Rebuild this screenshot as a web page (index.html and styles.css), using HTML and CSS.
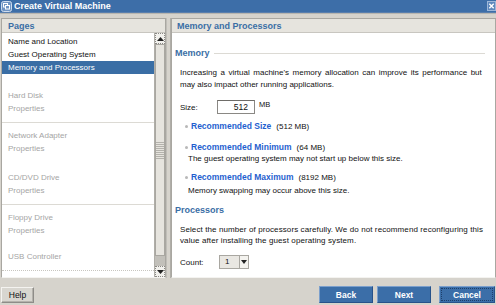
FILE: index.html
```html
<!DOCTYPE html>
<html>
<head>
<meta charset="utf-8">
<link rel="stylesheet" href="styles.css">
</head>
<body>
<div class="window">
  <div class="titlebar">
    <span class="title-icon">
      <svg width="11" height="11" viewBox="0 0 11 11">
        <rect x="0.5" y="0.5" width="10" height="10" rx="2" fill="#6f95c4" stroke="#cfdcee"/>
        <rect x="2.5" y="2.5" width="4" height="3.5" fill="none" stroke="#ffffff"/>
        <rect x="4.5" y="4.5" width="4" height="3.5" fill="#6f95c4" stroke="#ffffff"/>
      </svg>
    </span>
    <span class="title-text">Create Virtual Machine</span>
    <span class="close-btn">
      <svg width="8" height="8" viewBox="0 0 8 8"><path d="M1.5 1.5 L6.5 6.5 M6.5 1.5 L1.5 6.5" stroke="#ffffff" stroke-width="1.6"/></svg>
    </span>
  </div>
  <div class="title-rule"></div>

  <div class="main">
    <div class="pages-panel">
      <div class="panel-header">Pages</div>
      <div class="pages-body">
        <div class="pages-list">
          <div class="row">Name and Location</div>
          <div class="row">Guest Operating System</div>
          <div class="row selected">Memory and Processors</div>
          <div class="group g-hd">
            <div class="row dim">Hard Disk</div>
            <div class="row dim">Properties</div>
          </div>
          <div class="group g-net">
            <div class="row dim">Network Adapter</div>
            <div class="row dim">Properties</div>
          </div>
          <div class="group g-cd">
            <div class="row dim">CD/DVD Drive</div>
            <div class="row dim">Properties</div>
          </div>
          <div class="group g-fd">
            <div class="row dim">Floppy Drive</div>
            <div class="row dim">Properties</div>
          </div>
          <div class="group g-usb">
            <div class="row dim">USB Controller</div>
          </div>
        </div>
        <div class="scrollbar">
          <div class="sb-btn sb-up"><svg width="7" height="4" viewBox="0 0 7 4"><path d="M0 4 L3.5 0 L7 4 Z" fill="#222"/></svg></div>
          <div class="sb-thumb"><div class="grip"></div></div>
          <div class="sb-track"></div>
          <div class="sb-btn sb-down"><svg width="7" height="4" viewBox="0 0 7 4"><path d="M0 0 L3.5 4 L7 0 Z" fill="#222"/></svg></div>
        </div>
      </div>
    </div>

    <div class="splitter"></div>

    <div class="content-panel">
      <div class="panel-header">Memory and Processors</div>
      <div class="content-body">
        <div class="legend"><span>Memory</span><span class="legend-line"></span></div>
        <p class="para mem-para"><span class="just">Increasing a virtual machine's memory allocation can improve its performance but</span>may also impact other running applications.</p>
        <div class="size-row">
          <span class="lbl">Size:</span>
          <span class="size-input">512</span>
          <span class="unit">MB</span>
        </div>
        <div class="rec rec-first"><span class="dot"></span><span class="link">Recommended Size</span><span class="val">(512 MB)</span></div>
        <div class="rec"><span class="dot"></span><span class="link">Recommended Minimum</span><span class="val">(64 MB)</span></div>
        <div class="note">The guest operating system may not start up below this size.</div>
        <div class="rec rec-after-note"><span class="dot"></span><span class="link">Recommended Maximum</span><span class="val">(8192 MB)</span></div>
        <div class="note note-2">Memory swapping may occur above this size.</div>
        <div class="legend legend-proc"><span>Processors</span></div>
        <p class="para proc-para">Select the number of processors carefully. We do not recommend reconfiguring this value after installing the guest operating system.</p>
        <div class="count-row">
          <span class="lbl">Count:</span>
          <span class="combo"><span class="combo-val">1</span><span class="combo-btn"><svg width="6" height="4" viewBox="0 0 6 4"><path d="M0 0 L3 4 L6 0 Z" fill="#222"/></svg></span></span>
        </div>
      </div>
    </div>
  </div>

  <div class="footer">
    <button class="btn-help">Help</button>
    <div class="nav">
      <button class="btn-blue">Back</button>
      <button class="btn-blue">Next</button>
      <button class="btn-blue focus">Cancel</button>
    </div>
  </div>
</div>
</body>
</html>
```

FILE: styles.css
```css
* { box-sizing: border-box; }
html, body { margin: 0; padding: 0; }
body {
  width: 496px;
  height: 305px;
  overflow: hidden;
  background: #d6d3cc;
  font-family: "Liberation Sans", Arial, sans-serif;
  font-size: 8px;
  color: #111;
}
.window { width: 496px; height: 305px; display: flex; flex-direction: column; }

.titlebar {
  height: 12px;
  background: #3d6ea8;
  display: flex;
  align-items: center;
  padding-left: 1px;
  color: #fff;
}
.title-icon { width: 11px; height: 11px; display: flex; }
.title-text { font-weight: bold; font-size: 9px; margin-left: 2px; flex: 1; }
.close-btn {
  width: 9px; height: 10px;
  background: #5d87bc;
  border: 1px solid #9db7d9;
  display: flex; align-items: center; justify-content: center;
}
.title-rule { height: 2px; background: #5a7fad; border-bottom: 1px solid #b8b6b0; }

.main {
  display: flex;
  height: 260px;
  margin-top: 4px;
  padding-left: 1px;
}

.panel-header {
  height: 14px;
  background: #e6e4de;
  border-bottom: 1px solid #c8c6c0;
  color: #3a6ea5;
  font-weight: bold;
  font-size: 9px;
  line-height: 14px;
  padding-left: 6px;
}
.content-panel .panel-header { padding-left: 5px; }

.pages-panel {
  width: 165px;
  border: 1px solid #a9a7a1;
  border-bottom-color: #f4f3f0;
  display: flex;
  flex-direction: column;
  background: #fff;
}
.pages-body { flex: 1; display: flex; }
.pages-list { flex: 1; padding-top: 2px; }
.row { height: 13px; line-height: 13px; padding-left: 6px; white-space: nowrap; }
.row.selected { background: #3a6ea5; color: #fff; }
.row.dim { color: #a5a5a5; }
.group { padding-bottom: 7px; }
.g-hd { padding-top: 15px; border-bottom: 1px solid #dcdad4; }
.g-net { padding-top: 6px; padding-bottom: 16px; }
.g-cd { padding-bottom: 7px; border-bottom: 1px solid #dcdad4; }
.g-fd { padding-top: 6px; padding-bottom: 13px; }
.g-usb { padding-bottom: 7px; border-bottom: 1px dotted #c8c6c0; }

.scrollbar {
  width: 11px;
  display: flex;
  flex-direction: column;
  background: #c2c0ba;
  border-left: 1px solid #b0aea8;
}
.sb-btn {
  height: 11px;
  background: #f2f1ed;
  border: 1px dotted #8a8884;
  display: flex; align-items: center; justify-content: center;
}
.sb-thumb {
  height: 212px;
  background: #e6e4de;
  border: 1px solid #a9a7a1;
  display: flex; align-items: center; justify-content: center;
}
.grip {
  width: 8px; height: 18px;
  background-image: repeating-linear-gradient(0deg, #b4b2ac 0 1px, transparent 1px 2px);
}
.sb-track { flex: 1; }

.splitter {
  width: 5px;
  background: #d6d3cc;
  border-left: 1px solid #c0beb8;
  border-right: 1px solid #b0aea8;
}

.content-panel {
  width: 325px;
  border: 1px solid #a9a7a1;
  border-bottom-color: #f4f3f0;
  background: #fff;
  display: flex;
  flex-direction: column;
}
.content-body { flex: 1; padding: 14px 10px 0 3px; }

.legend {
  display: flex;
  align-items: center;
  color: #3a6ea5;
  font-weight: bold;
  font-size: 9px;
  height: 12px;
}
.legend-line { flex: 1; height: 1px; background: #dcdad4; margin-left: 4px; }
.legend-proc { margin-top: 7px; }

.para { margin: 0; padding-left: 5px; line-height: 12px; }
.mem-para { margin-top: 8px; }
.just { display: block; white-space: nowrap; word-spacing: 1.3px; }
.proc-para { margin-top: 8px; line-height: 11px; letter-spacing: 0.1px; }

.size-row { display: flex; align-items: center; height: 14px; margin-top: 9px; padding-left: 5px; }
.lbl { width: 37px; }
.size-input {
  width: 38px; height: 14px;
  border: 1px solid #8a8884;
  border-top-color: #6e6c68;
  text-align: right;
  padding-right: 6px;
  line-height: 12px;
  font-size: 8.5px;
}
.unit { margin-left: 4px; align-self: flex-start; font-size: 7.5px; }

.rec { display: flex; align-items: center; height: 12px; margin-top: 9px; padding-left: 10px; }
.rec-first { margin-top: 6px; }
.rec-after-note { margin-top: 6px; }
.dot { width: 3px; height: 3px; border-radius: 50%; background: #b8b8b8; margin-right: 3px; }
.link { color: #1f5fcf; font-weight: bold; font-size: 8.5px; }
.val { margin-left: 5px; }
.note { padding-left: 13px; height: 12px; line-height: 12px; }
.note-2 { margin-top: 2px; }

.count-row { display: flex; align-items: center; height: 14px; margin-top: 9px; padding-left: 5px; }
.combo {
  display: flex;
  width: 30px; height: 14px;
  border: 1px solid #a9a7a1;
  background: #e9e7e2;
}
.combo-val { flex: 1; line-height: 12px; padding-left: 5px; }
.combo-btn {
  width: 9px; border-left: 1px solid #a9a7a1; background: #f4f3ef;
  display: flex; align-items: center; justify-content: center;
}
.count-row .lbl { width: 39px; }

.footer {
  flex: 1;
  display: flex;
  align-items: flex-start;
  justify-content: space-between;
  padding: 8px 1px 0 1px;
}
button { font-family: "Liberation Sans", Arial, sans-serif; cursor: default; }
.btn-help {
  width: 33px; height: 16px;
  margin-top: 1px;
  background: #d8d6d0;
  border: 1px solid #8e8c88;
  border-top-color: #f4f3f0;
  border-left-color: #f4f3f0;
  box-shadow: inset -1px -1px 0 #b4b2ac;
  font-size: 8.5px;
  padding: 0;
  color: #111;
}
.nav { display: flex; gap: 4px; }
.btn-blue {
  width: 54px; height: 17px;
  background: #3b6ea8;
  border: 1px solid #27528a;
  border-top-color: #7b9fcc;
  border-left-color: #7b9fcc;
  color: #fff;
  font-weight: bold;
  font-size: 8.5px;
  padding: 0;
}
.btn-blue.focus { width: 56px; margin-left: 4px; outline: 1px dotted #1c3e6a; outline-offset: -3px; }
```
